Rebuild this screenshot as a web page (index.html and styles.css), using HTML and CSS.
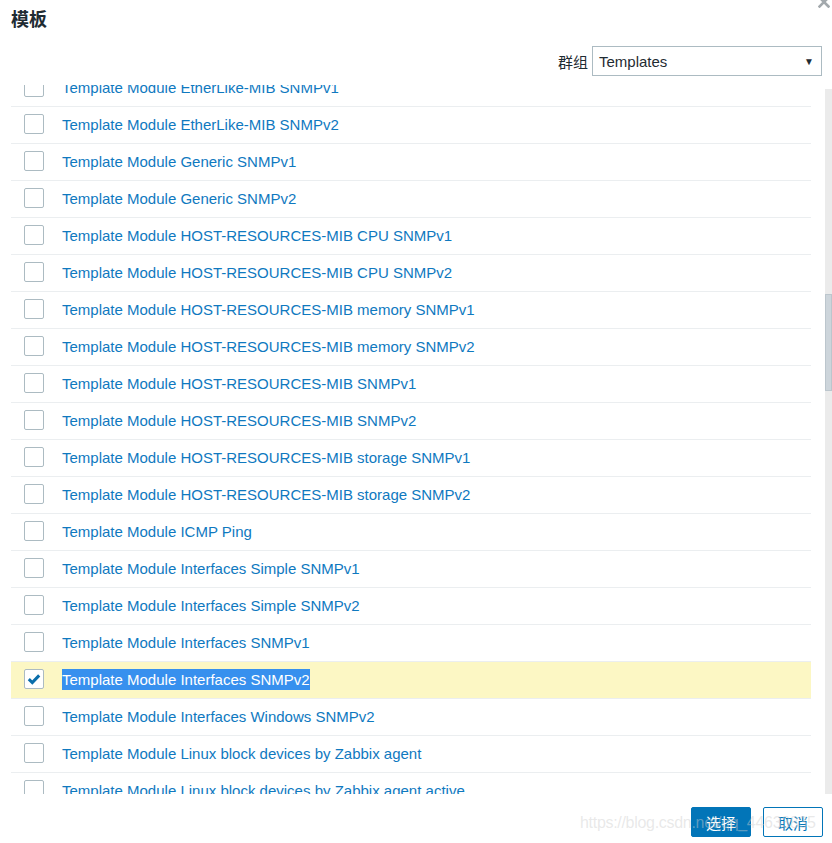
FILE: index.html
```html
<!DOCTYPE html>
<html lang="zh">
<head>
<meta charset="utf-8">
<title>模板</title>
<link rel="stylesheet" href="styles.css">
</head>
<body>
<div class="dialog">
  <div class="head">
    <h1 class="title">模板</h1>
    <button class="close" type="button" aria-label="close">
      <svg width="12" height="12" viewBox="0 0 12 12"><path d="M1.5 1.5 L10.5 10.5 M10.5 1.5 L1.5 10.5" stroke="#a3a9ad" stroke-width="2.6" stroke-linecap="square"/></svg>
    </button>
  </div>
  <div class="filters">
    <span class="flabel">群组</span>
    <div class="select"><span>Templates</span><span class="arrow">&#9660;</span></div>
  </div>
  <div class="listwrap">
    <ul class="list">
      <li class="row"><span class="cb"></span><a class="name">Template Module EtherLike-MIB SNMPv1</a></li>
      <li class="row"><span class="cb"></span><a class="name">Template Module EtherLike-MIB SNMPv2</a></li>
      <li class="row"><span class="cb"></span><a class="name">Template Module Generic SNMPv1</a></li>
      <li class="row"><span class="cb"></span><a class="name">Template Module Generic SNMPv2</a></li>
      <li class="row"><span class="cb"></span><a class="name">Template Module HOST-RESOURCES-MIB CPU SNMPv1</a></li>
      <li class="row"><span class="cb"></span><a class="name">Template Module HOST-RESOURCES-MIB CPU SNMPv2</a></li>
      <li class="row"><span class="cb"></span><a class="name">Template Module HOST-RESOURCES-MIB memory SNMPv1</a></li>
      <li class="row"><span class="cb"></span><a class="name">Template Module HOST-RESOURCES-MIB memory SNMPv2</a></li>
      <li class="row"><span class="cb"></span><a class="name">Template Module HOST-RESOURCES-MIB SNMPv1</a></li>
      <li class="row"><span class="cb"></span><a class="name">Template Module HOST-RESOURCES-MIB SNMPv2</a></li>
      <li class="row"><span class="cb"></span><a class="name">Template Module HOST-RESOURCES-MIB storage SNMPv1</a></li>
      <li class="row"><span class="cb"></span><a class="name">Template Module HOST-RESOURCES-MIB storage SNMPv2</a></li>
      <li class="row"><span class="cb"></span><a class="name">Template Module ICMP Ping</a></li>
      <li class="row"><span class="cb"></span><a class="name">Template Module Interfaces Simple SNMPv1</a></li>
      <li class="row"><span class="cb"></span><a class="name">Template Module Interfaces Simple SNMPv2</a></li>
      <li class="row"><span class="cb"></span><a class="name">Template Module Interfaces SNMPv1</a></li>
      <li class="row selected"><span class="cb checked"><svg width="18" height="18" viewBox="0 0 18 18"><path d="M3.8 9.2 L7.3 12.6 L14.2 5.4" fill="none" stroke="#0a6eaa" stroke-width="3"/></svg></span><a class="name"><span class="sel">Template Module Interfaces SNMPv2</span></a></li>
      <li class="row"><span class="cb"></span><a class="name">Template Module Interfaces Windows SNMPv2</a></li>
      <li class="row"><span class="cb"></span><a class="name">Template Module Linux block devices by Zabbix agent</a></li>
      <li class="row"><span class="cb"></span><a class="name">Template Module Linux block devices by Zabbix agent active</a></li>
    </ul>
    <div class="scrollbar"><div class="thumb"></div></div>
  </div>
  <div class="footer">
    <button class="btn primary" type="button">选择</button>
    <button class="btn" type="button">取消</button>
  </div>
  <div class="watermark">https://blog.csdn.net/qq_44633835</div>
</div>
</body>
</html>
```

FILE: styles.css
```css
html, body {
  margin: 0;
  padding: 0;
  background: #ffffff;
}

body {
  font-family: "Liberation Sans", Arial, "Noto Sans CJK SC", sans-serif;
  font-size: 15px;
  color: #1f2c33;
}

.dialog {
  position: relative;
  width: 832px;
  height: 843px;
  overflow: hidden;
}

.head {
  height: 46px;
  box-sizing: border-box;
  padding: 7px 11px 0;
}

.title {
  margin: 0;
  font-family: "Noto Sans CJK SC", sans-serif;
  font-size: 18px;
  line-height: 22px;
  font-weight: bold;
  color: #1f2c33;
}

.close {
  position: absolute;
  top: -4px;
  right: 2px;
  width: 12px;
  height: 12px;
  padding: 0;
  border: 0;
  background: none;
  display: block;
}

.close svg {
  display: block;
}

.filters {
  display: flex;
  justify-content: flex-end;
  align-items: center;
  gap: 4px;
  height: 30px;
  padding-right: 10px;
}

.flabel {
  font-family: "Noto Sans CJK SC", sans-serif;
  font-size: 15px;
  color: #1f2c33;
}

.select {
  width: 230px;
  height: 30px;
  box-sizing: border-box;
  border: 1px solid #acbbc2;
  display: flex;
  align-items: center;
  justify-content: space-between;
  padding: 0 7px 0 6px;
  font-size: 15px;
  color: #1f2c33;
}

.arrow {
  font-size: 10px;
  color: #1f2c33;
}

.listwrap {
  position: relative;
  margin: 9px 0 0 11px;
  width: 821px;
  height: 709px;
  overflow: hidden;
}

.list {
  list-style: none;
  margin: -15px 0 0;
  padding: 0;
  width: 800px;
}

.row {
  height: 36px;
  box-sizing: content-box;
  border-bottom: 1px solid #ebeef0;
  display: flex;
  align-items: center;
  padding-left: 13px;
}

.row > * {
  margin-top: -2px;
}

.row.selected {
  background: #fcf7c4;
}

.cb {
  width: 20px;
  height: 20px;
  box-sizing: border-box;
  border: 1px solid #acbbc2;
  border-radius: 2px;
  background: #ffffff;
  flex: none;
  display: flex;
  align-items: center;
  justify-content: center;
}

.cb svg {
  display: block;
}

.name {
  margin-left: 18px;
  color: #0f79bf;
  font-size: 15px;
  white-space: nowrap;
}

.sel {
  display: inline-block;
  height: 21px;
  line-height: 21px;
  background: #3790ee;
  color: #ffffff;
}

.scrollbar {
  position: absolute;
  top: 4px;
  right: 0;
  bottom: 0;
  width: 7px;
  background: #ebebeb;
}

.thumb {
  margin-top: 205px;
  height: 97px;
  box-sizing: border-box;
  background: #cdd5db;
  border: 1px solid #bcc6cd;
}

.footer {
  display: flex;
  justify-content: flex-end;
  gap: 12px;
  margin-top: 13px;
  padding-right: 9px;
}

.btn {
  width: 60px;
  height: 30px;
  box-sizing: border-box;
  border: 1px solid #0275b8;
  border-radius: 2px;
  background: #ffffff;
  color: #0275b8;
  font-family: "Noto Sans CJK SC", sans-serif;
  font-size: 15px;
  padding: 0;
}

.btn.primary {
  background: #0275b8;
  color: #ffffff;
}

.watermark {
  position: absolute;
  left: 580px;
  top: 814px;
  font-family: "Liberation Sans", Arial, sans-serif;
  font-size: 16px;
  letter-spacing: -0.3px;
  color: rgba(205, 205, 205, 0.45);
  white-space: nowrap;
  pointer-events: none;
}
```
